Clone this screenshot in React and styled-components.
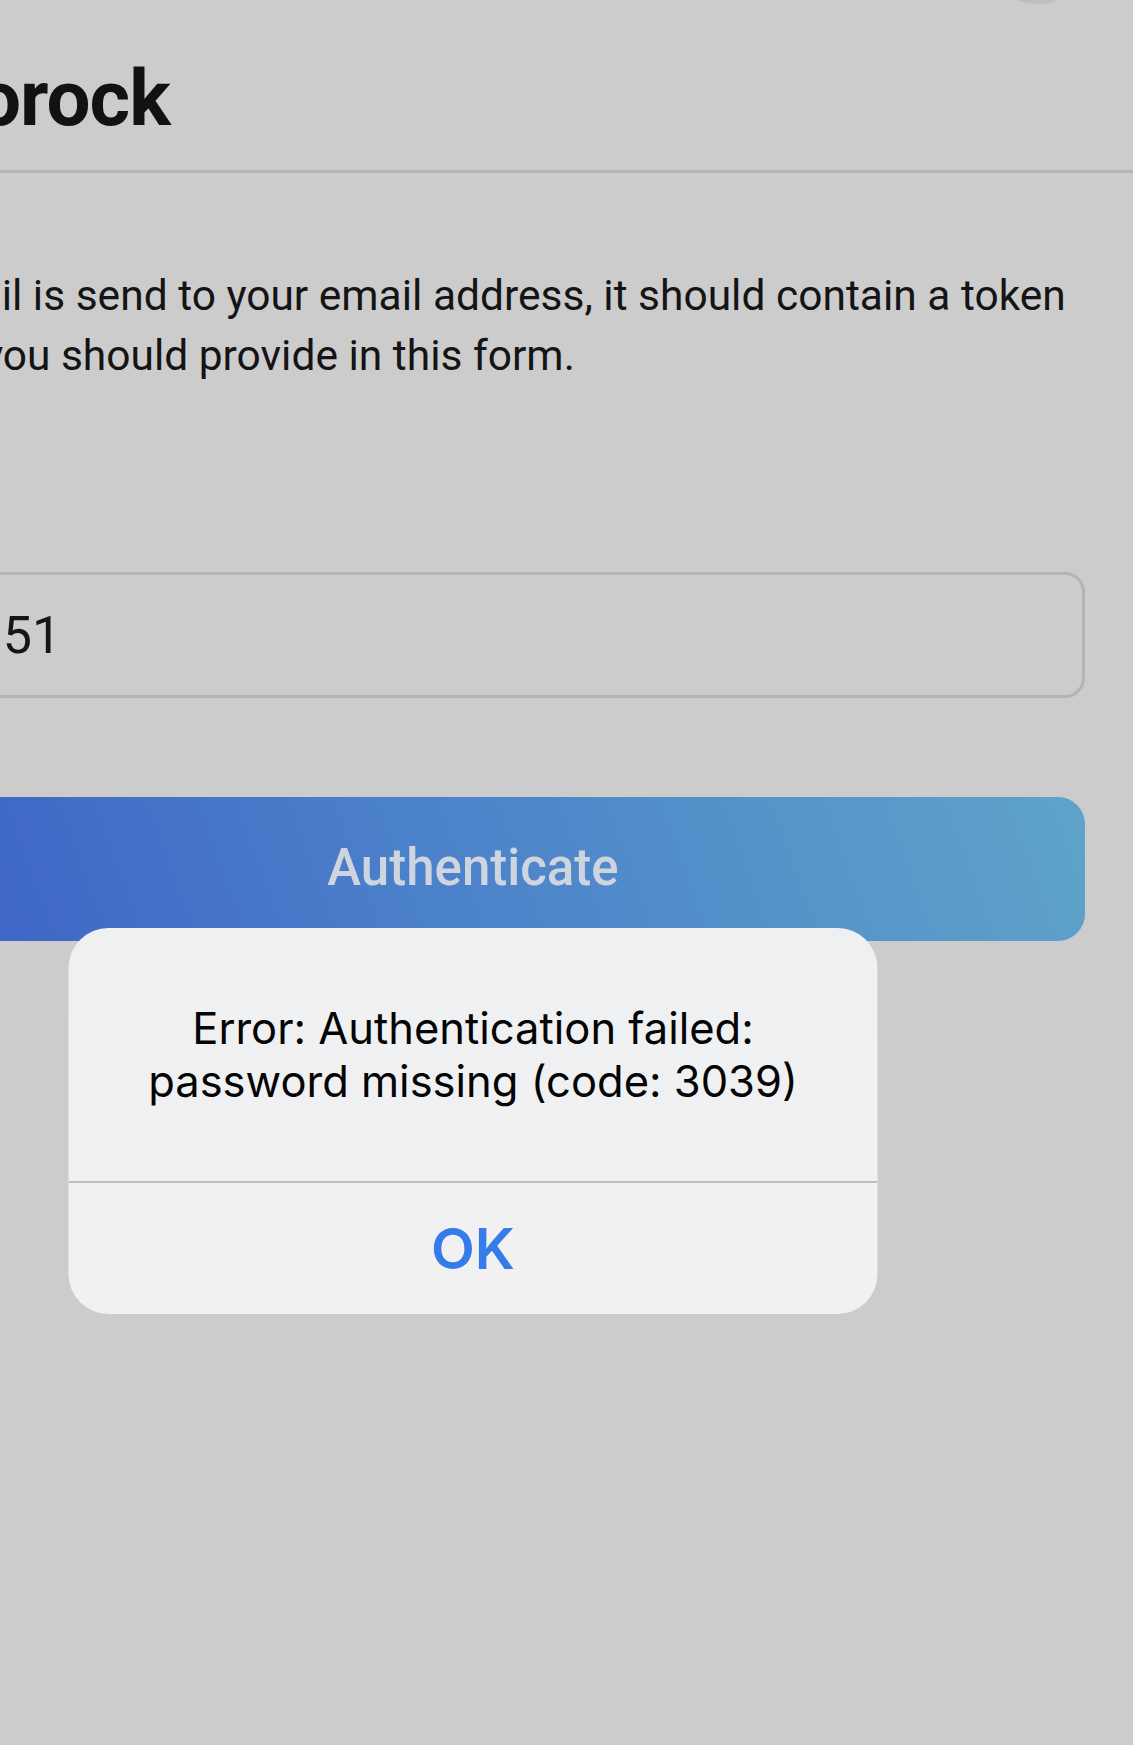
import React from "react";
import styled, { createGlobalStyle } from "styled-components";

const GlobalStyle = createGlobalStyle`
  html, body {
    margin: 0;
    padding: 0;
    background: #cccccc;
    overflow: hidden;
  }
  body {
    width: 1133px;
    height: 1745px;
    font-family: Roboto, "Noto Sans", sans-serif;
  }
`;

// the screen is wider than the photo: its left part is cut off
const Screen = styled.div`
  position: relative;
  width: 1320px;
  height: 1745px;
  margin-left: -187px;
  background: #cccccc;
  color: #141414;
`;

const Header = styled.header`
  padding: 59px 48px 31px 52px;
  border-bottom: 3px solid #b4b4b6;
`;

const Title = styled.h1`
  margin: 0;
  font-size: 78px;
  line-height: 80px;
  font-weight: 700;
  letter-spacing: -1px;
  color: #121212;
`;

const CornerButton = styled.div`
  position: absolute;
  top: -116px;
  right: 35px;
  width: 120px;
  height: 120px;
  border-radius: 50%;
  background: #bfbfc1;
`;

const Content = styled.main`
  display: flex;
  flex-direction: column;
  padding: 93px 48px 0;
`;

const Intro = styled.p`
  margin: 0 0 0 ${(p) => p.shift}px;
  text-indent: ${(p) => p.indent}px;
  font-size: 42.5px;
  line-height: 60px;
  white-space: nowrap;
`;

const TokenInput = styled.input`
  box-sizing: border-box;
  margin-top: 186px;
  width: 100%;
  height: 126px;
  padding: 0 51px;
  border: 3px solid #b4b4b6;
  border-radius: 20px;
  background: transparent;
  font-family: Roboto, "Noto Sans", sans-serif;
  font-size: 52px;
  color: #151515;
  outline: none;
`;

const SubmitButton = styled.button`
  margin-top: 99px;
  width: 100%;
  height: 144px;
  padding: 0 0 4px;
  border: none;
  border-radius: 27px;
  background: linear-gradient(70deg, #3a5ec4 0%, #4b80ca 45%, #5ea4c9 100%);
  font-family: Roboto, "Noto Sans", sans-serif;
  font-size: 51px;
  font-weight: 500;
  color: #cfd5de;
`;

const Alert = styled.div`
  position: absolute;
  top: 928px;
  left: 50%;
  transform: translateX(-50%);
  width: 809px;
  border-radius: 40px;
  overflow: hidden;
  background: linear-gradient(180deg, #eff0f2 0%, #f1f1f2 100%);
  font-family: Inter, Roboto, sans-serif;
`;

const AlertMessage = styled.div`
  padding: 74px 30px 73px;
  font-size: 43.5px;
  line-height: 53px;
  text-align: center;
  color: #050505;
`;

const AlertAction = styled.div`
  display: flex;
  align-items: center;
  justify-content: center;
  height: 131px;
  border-top: 2px solid #bdbdc0;
  font-size: 57px;
  font-weight: 600;
  color: #367bea;
`;

export default function App() {
  return (
    <>
      <GlobalStyle />
      <Screen>
        <CornerButton />
        <Header>
          <Title>Dinorock</Title>
        </Header>
        <Content>
          <Intro shift={0} indent={-4}>
            An email is send to your email address, it should contain a token
            <br />
            which you should provide in this form.
          </Intro>
          <TokenInput readOnly value="28151" />
          <SubmitButton>Authenticate</SubmitButton>
        </Content>
        <Alert>
          <AlertMessage>
            Error: Authentication failed:
            <br />
            password missing (code: 3039)
          </AlertMessage>
          <AlertAction>OK</AlertAction>
        </Alert>
      </Screen>
    </>
  );
}
